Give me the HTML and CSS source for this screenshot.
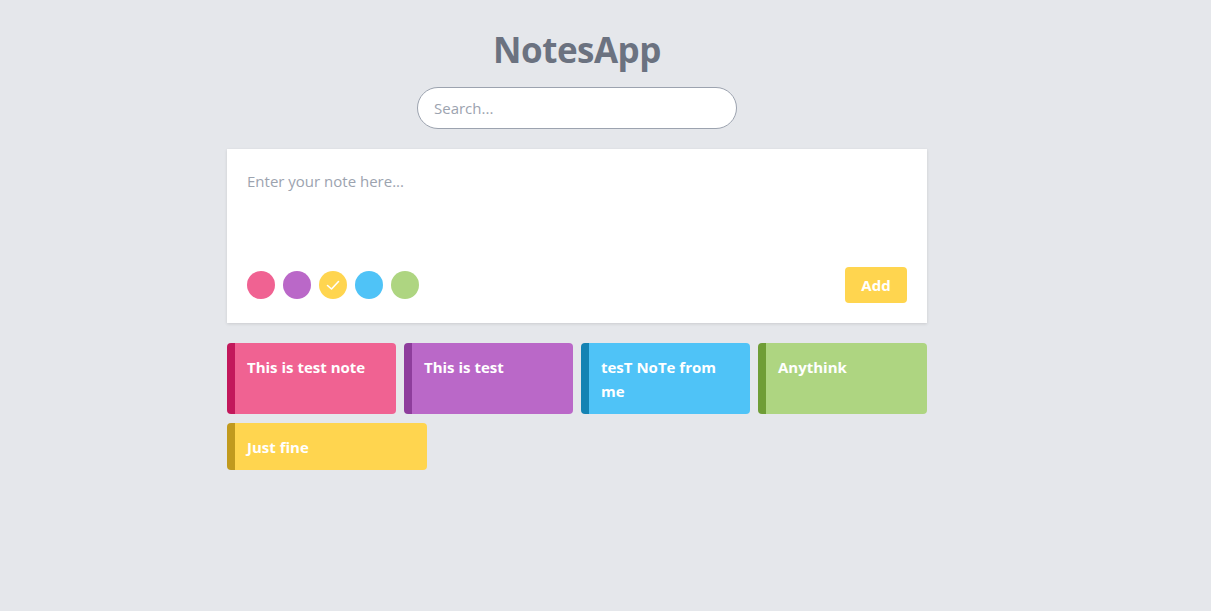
FILE: index.html
```html
<!DOCTYPE html>
<html lang="en">
<head>
<meta charset="utf-8">
<title>NotesApp</title>
<link rel="stylesheet" href="styles.css">
</head>
<body>
<div class="app">
  <h1 class="title">NotesApp</h1>
  <div class="search-wrap">
    <input class="search" type="text" placeholder="Search...">
  </div>
  <div class="editor">
    <textarea class="note-input" placeholder="Enter your note here..."></textarea>
    <div class="editor-bar">
      <div class="colors">
        <span class="dot pink"></span>
        <span class="dot purple"></span>
        <span class="dot yellow selected">
          <svg viewBox="0 0 28 28" width="28" height="28"><path d="M8.5 14.5 L12.5 18 L19.5 10.5" fill="none" stroke="#fff" stroke-width="1.6" stroke-linecap="round" stroke-linejoin="round"/></svg>
        </span>
        <span class="dot blue"></span>
        <span class="dot green"></span>
      </div>
      <button class="add">Add</button>
    </div>
  </div>
  <div class="notes">
    <div class="note n-pink">This is test note</div>
    <div class="note n-purple">This is test</div>
    <div class="note n-blue">tesT NoTe from me</div>
    <div class="note n-green">Anythink</div>
    <div class="note n-yellow wide">Just fine</div>
  </div>
</div>
</body>
</html>
```

FILE: styles.css
```css
* { box-sizing: border-box; }
html, body { margin: 0; padding: 0; }
body {
  background: #e5e7eb;
  font-family: "Open Sans", "Noto Sans", sans-serif;
  color: #6b7280;
}
.app {
  width: 700px;
  margin-left: 227px;
  padding-top: 26px;
}
.title {
  margin: 0;
  text-align: center;
  font-size: 35px;
  line-height: 48px;
  font-weight: 700;
  color: #6b7280;
  letter-spacing: -0.5px;
}
.search-wrap {
  display: flex;
  justify-content: center;
  margin-top: 13px;
}
.search {
  width: 320px;
  height: 42px;
  border: 1px solid #9ca3af;
  border-radius: 21px;
  padding: 0 16px;
  font-family: inherit;
  font-size: 15px;
  color: #374151;
  background: #fff;
  outline: none;
}
.search::placeholder { color: #9ca3af; }
.editor {
  margin-top: 20px;
  background: #fff;
  padding: 20px;
  box-shadow: 0 1px 3px rgba(0,0,0,0.12);
}
.note-input {
  display: block;
  width: 100%;
  height: 98px;
  border: none;
  resize: none;
  outline: none;
  padding: 0;
  font-family: inherit;
  font-size: 15px;
  line-height: 24px;
  color: #374151;
}
.note-input::placeholder { color: #9ca3af; }
.editor-bar {
  display: flex;
  align-items: center;
  justify-content: space-between;
}
.colors { display: flex; gap: 8px; }
.dot {
  width: 28px;
  height: 28px;
  border-radius: 50%;
  display: block;
}
.dot svg { display: block; }
.pink { background: #f06292; }
.purple { background: #ba68c8; }
.yellow { background: #ffd54f; }
.blue { background: #4fc3f7; }
.green { background: #aed581; }
.add {
  width: 62px;
  height: 36px;
  border: none;
  border-radius: 4px;
  background: #ffd54f;
  color: #fff;
  font-family: inherit;
  font-weight: 700;
  font-size: 15px;
  padding: 0;
}
.notes {
  margin-top: 20px;
  display: grid;
  grid-template-columns: repeat(4, minmax(0, 1fr));
  gap: 9px 8px;
}
.note {
  border-radius: 4px;
  border-left: 8px solid;
  padding: 12px 12px 11px 12px;
  color: #fff;
  font-weight: 700;
  font-size: 15px;
  line-height: 24px;
}
.note.wide { width: 200px; }
.n-pink { background: #f06292; border-left-color: #c2185b; }
.n-purple { background: #ba68c8; border-left-color: #8e3d9c; }
.n-blue { background: #4fc3f7; border-left-color: #1583b3; }
.n-green { background: #aed581; border-left-color: #6f9d36; }
.n-yellow { background: #ffd54f; border-left-color: #c19a1e; }
```
